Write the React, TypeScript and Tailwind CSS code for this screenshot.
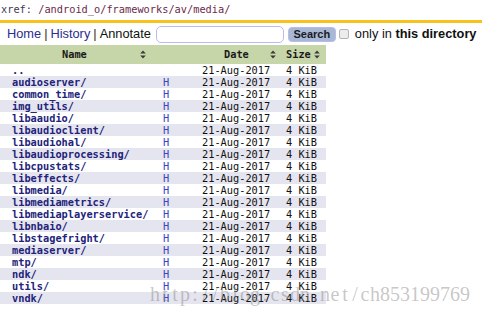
import React from "react";

const rows = [
  "..",
  "audioserver/",
  "common_time/",
  "img_utils/",
  "libaaudio/",
  "libaudioclient/",
  "libaudiohal/",
  "libaudioprocessing/",
  "libcpustats/",
  "libeffects/",
  "libmedia/",
  "libmediametrics/",
  "libmediaplayerservice/",
  "libnbaio/",
  "libstagefright/",
  "mediaserver/",
  "mtp/",
  "ndk/",
  "utils/",
  "vndk/",
];

const mono = { fontFamily: '"DejaVu Sans Mono", monospace' };

function SortIcon() {
  return (
    <svg width="6" height="9" viewBox="0 0 6 9" className="shrink-0">
      <path d="M3 0.5 L5.8 3.6 L0.2 3.6 Z" fill="#3a3a3a" />
      <path d="M3 8.5 L5.8 5.4 L0.2 5.4 Z" fill="#3a3a3a" />
    </svg>
  );
}

const watermark = "http://blog.csdn.net/ch853199769";

export default function App() {
  return (
    <div className="relative w-[482px] h-[316px] overflow-hidden bg-white">
      <div
        className="h-[20px] pl-[1px] pt-[2px] text-[10.3px] leading-[14px] font-['DejaVu_Sans_Mono',monospace]"
      >
        <span className="text-[#3b3b55]">xref: </span>
        <span className="text-[#6b2a4a]">/android_o/frameworks/av/media/</span>
      </div>
      <div className="h-[3px] bg-[#f8c21e]" />
      <div className="h-[22px] flex items-center pl-[7px] text-[12.8px] font-['Liberation_Sans',Arial,sans-serif]">
        <span className="text-[#2a2e8c]">Home</span>
        <span className="mx-[3px] text-[#3a2a10]">|</span>
        <span className="text-[#2a2e8c]">History</span>
        <span className="mx-[3px] text-[#3a2a10]">|</span>
        <span className="text-[#111]">Annotate</span>
        <div className="ml-[5px] w-[128px] h-[17px] rounded-[5px] border border-[#b9b9f5] bg-white shrink-0" />
        <div className="ml-[4px] w-[48px] h-[15px] shrink-0 rounded-[4px] border border-[#b8bbee] bg-[#a8b8d2] flex items-center justify-center text-[11px] font-bold text-[#1a1a2a]">
          Search
        </div>
        <div className="ml-[3px] w-[10px] h-[10px] shrink-0 rounded-[2px] border border-[#b5b5b5] bg-[#ececec]" />
        <span className="ml-[6px] text-[#111] whitespace-nowrap">
          only in <b>this directory</b>
        </span>
      </div>
      <div className="w-[326px] text-[10.3px]" style={mono}>
        <div className="grid grid-cols-[150px_46px_87px_43px] h-[19px] bg-[#c7d6a9] font-bold text-[#1a1a1a]">
          <div className="flex items-center pl-[62px] pr-[4px]">
            <span>Name</span>
            <span className="ml-auto"><SortIcon /></span>
          </div>
          <div />
          <div className="flex items-center pl-[28px] pr-[7px]">
            <span>Date</span>
            <span className="ml-auto"><SortIcon /></span>
          </div>
          <div className="flex items-center pl-[3px] pr-[6px]">
            <span>Size</span>
            <span className="ml-auto"><SortIcon /></span>
          </div>
        </div>
        {rows.map((name, i) => (
          <div
            key={name}
            className={`grid grid-cols-[150px_46px_87px_43px] h-[12px] leading-[12px] ${
              i % 2 === 1 ? "bg-[#e5e5ef]" : "bg-white"
            }`}
          >
            <div className="pl-[12px] font-bold text-[#23237a] whitespace-nowrap">{name}</div>
            <div className="pl-[13px] text-[#3a45c2]">{i === 0 ? "" : "H"}</div>
            <div className="pl-[6px] text-[#111]">21-Aug-2017</div>
            <div className="pl-[3px] text-[#111] whitespace-nowrap">4 KiB</div>
          </div>
        ))}
      </div>
      <div className="absolute left-[150px] top-[283px] flex text-[20px] leading-[22px] text-[rgba(130,130,130,0.45)] font-['Liberation_Serif',serif] pointer-events-none">
        {watermark.split("").map((c, i) => (
          <span key={i} className="inline-block w-[10px] text-center">
            {c}
          </span>
        ))}
      </div>
    </div>
  );
}
